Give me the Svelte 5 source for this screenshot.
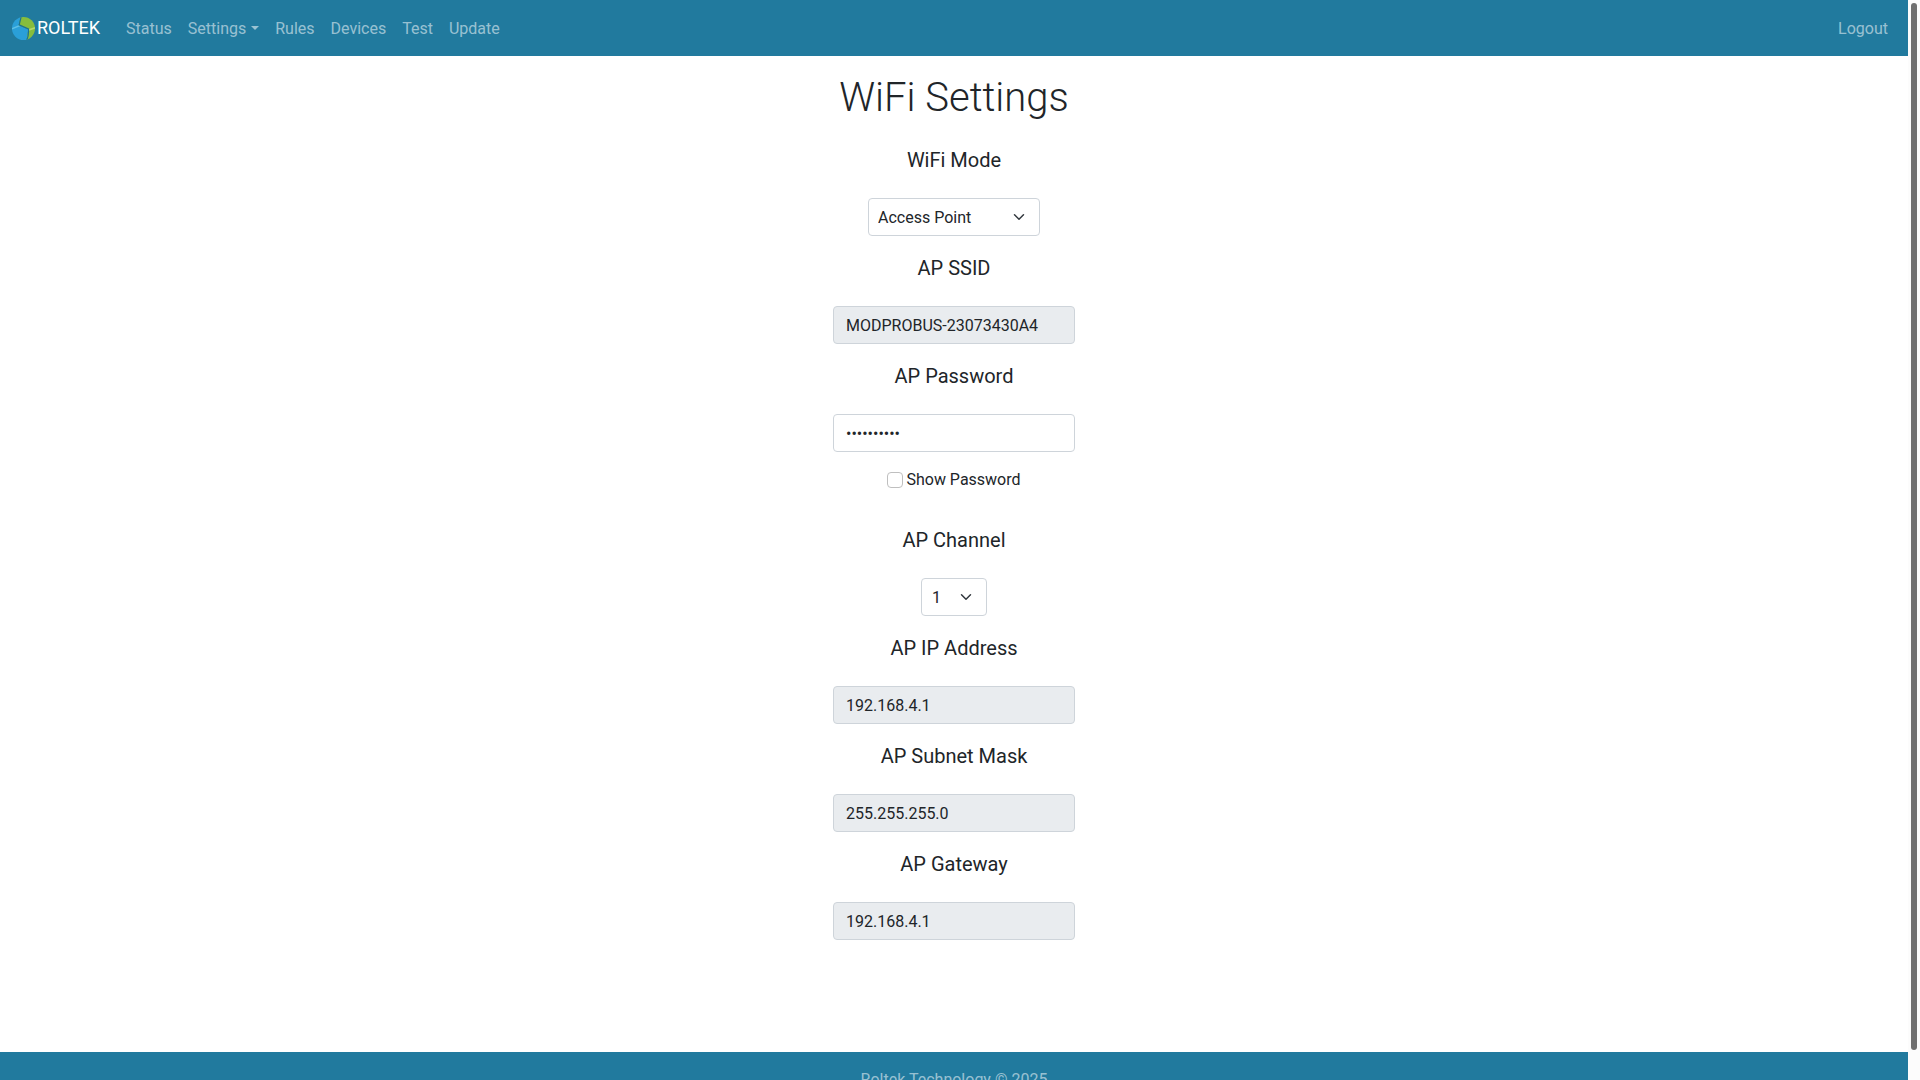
<script lang="ts">
  import { onMount } from 'svelte';

  const channels = [1, 2, 3, 4, 5, 6, 7, 8, 9, 10, 11, 12, 13];

  let mode = $state('ap');
  let ssid = $state('MODPROBUS-23073430A4');
  let password = $state('roltek1234');
  let showPassword = $state(false);
  let channel = $state(1);
  let ip = $state('192.168.4.1');
  let subnet = $state('255.255.255.0');
  let gateway = $state('192.168.4.1');

  let scroller: HTMLDivElement | undefined = $state();
  let thumbSize = $state(100);
  let thumbTop = $state(0);

  function updateThumb() {
    if (!scroller) return;
    thumbSize = (scroller.clientHeight / scroller.scrollHeight) * 100;
    thumbTop = (scroller.scrollTop / scroller.scrollHeight) * 100;
  }

  onMount(updateThumb);
</script>

<svelte:window onresize={updateThumb} />

<div class="shell">
  <div class="page" bind:this={scroller} onscroll={updateThumb}>
    <nav class="navbar">
      <a class="brand" href="#home">
        <svg width="23" height="23" viewBox="0 0 24 24">
          <clipPath id="globe"><circle cx="12" cy="12" r="12" /></clipPath>
          <g clip-path="url(#globe)">
            <path d="M0 0h9L7 8.500l10 4.200L15.300 24H0z" fill="#2a9fd8" />
            <path d="M9 0h15v24h-8.700L17 12.700 7 8.500z" fill="#86bd3d" />
            <path d="M0 11.500l7-3 1.500 1.200L0 13z" fill="#5fc0e6" />
            <path d="M17 12.700l7-2.200v1.700l-7 2.300z" fill="#b4d86c" />
            <path d="M9.500 0L7.500 8.200l9.700 4.200c.3 4-.3 8-1.700 11.600" fill="none" stroke="#1c7191" stroke-width="1.200" />
          </g>
        </svg>
        <span>ROLTEK</span>
      </a>
      <ul class="nav">
        <li><a href="#status">Status</a></li>
        <li><a class="dropdown" href="#settings">Settings</a></li>
        <li><a href="#rules">Rules</a></li>
        <li><a href="#devices">Devices</a></li>
        <li><a href="#test">Test</a></li>
        <li><a href="#update">Update</a></li>
      </ul>
      <a class="logout" href="#logout">Logout</a>
    </nav>

    <main>
      <h1>WiFi Settings</h1>
      <form>
        <div class="field">
          <label for="mode">WiFi Mode</label>
          <select id="mode" class="mode" bind:value={mode}>
            <option value="ap">Access Point</option>
            <option value="sta">Station</option>
          </select>
        </div>
        <div class="field">
          <label for="ssid">AP SSID</label>
          <input id="ssid" type="text" bind:value={ssid} disabled />
        </div>
        <div class="field">
          <label for="password">AP Password</label>
          <input id="password" type={showPassword ? 'text' : 'password'} bind:value={password} />
        </div>
        <div class="check">
          <input id="show" type="checkbox" bind:checked={showPassword} />
          <label for="show">Show Password</label>
        </div>
        <div class="field">
          <label for="channel">AP Channel</label>
          <select id="channel" bind:value={channel}>
            {#each channels as n}
              <option value={n}>{n}</option>
            {/each}
          </select>
        </div>
        <div class="field">
          <label for="ip">AP IP Address</label>
          <input id="ip" type="text" bind:value={ip} disabled />
        </div>
        <div class="field">
          <label for="subnet">AP Subnet Mask</label>
          <input id="subnet" type="text" bind:value={subnet} disabled />
        </div>
        <div class="field">
          <label for="gateway">AP Gateway</label>
          <input id="gateway" type="text" bind:value={gateway} disabled />
        </div>
      </form>
    </main>

    <footer>Roltek Technology © 2025</footer>
  </div>

  <div class="track" aria-hidden="true">
    <div class="rail">
      <div class="thumb" style="height: {thumbSize}%; top: {thumbTop}%"></div>
    </div>
  </div>
</div>

<style>
  :global(body) {
    margin: 0;
    font-family: Roboto, sans-serif;
    font-size: 16px;
    line-height: 24px;
    color: #212529;
    background: #fff;
  }

  .shell {
    display: grid;
    grid-template-columns: 1fr 12px;
    height: 100vh;
  }

  .page {
    overflow-y: auto;
    scrollbar-width: none;
  }

  .track {
    display: flex;
    justify-content: center;
    padding: 3px 0;
    background: #fcfcfc;
  }

  .rail {
    position: relative;
    width: 6px;
  }

  .thumb {
    position: absolute;
    width: 100%;
    border-radius: 3px;
    background: #707070;
  }

  .navbar {
    display: flex;
    align-items: center;
    box-sizing: border-box;
    min-height: 56px;
    padding: 8px 12px;
    background: #217a9e;
  }

  .navbar a {
    text-decoration: none;
  }

  .brand {
    display: flex;
    align-items: center;
    gap: 2px;
    margin-right: 18px;
    font-size: 18px;
    color: #fff;
  }

  .nav {
    display: flex;
    flex: 1;
    margin: 0;
    padding: 0;
    list-style: none;
  }

  .nav a,
  .logout {
    display: block;
    padding: 9px 8px 7px;
    color: rgba(255, 255, 255, 0.55);
  }

  .nav a:hover,
  .logout:hover {
    color: rgba(255, 255, 255, 0.75);
  }

  .dropdown::after {
    content: '';
    display: inline-block;
    margin-left: 5px;
    vertical-align: 4px;
    border-top: 4px solid;
    border-right: 4px solid transparent;
    border-left: 4px solid transparent;
  }

  main {
    padding: 18px 12px 112px;
  }

  h1 {
    margin: 0 0 26px;
    font-size: 40px;
    font-weight: 300;
    line-height: 48px;
    text-align: center;
  }

  form {
    display: flex;
    flex-direction: column;
    gap: 20px;
  }

  .field {
    display: flex;
    flex-direction: column;
    align-items: center;
    gap: 26px;
  }

  .field label {
    font-size: 20px;
    line-height: 24px;
  }

  .field input,
  .field select {
    box-sizing: border-box;
    height: 38px;
    padding: 6px 12px;
    border: 1px solid #ced4da;
    border-radius: 4px;
    font: inherit;
    color: #212529;
    background-color: #fff;
  }

  .field input {
    width: 242px;
  }

  .field input:disabled {
    background-color: #e9ecef;
  }

  .field select {
    width: 66px;
    padding: 7px 36px 5px 10px;
    appearance: none;
    background-image: url("data:image/svg+xml,%3csvg xmlns='http://www.w3.org/2000/svg' viewBox='0 0 16 16'%3e%3cpath fill='none' stroke='%23343a40' stroke-linecap='round' stroke-linejoin='round' stroke-width='2' d='M2 5l6 6 6-6'/%3e%3c/svg%3e");
    background-repeat: no-repeat;
    background-position: right 12px center;
    background-size: 16px 12px;
  }

  .field select.mode {
    width: 172px;
    padding-left: 9px;
  }

  .check {
    display: flex;
    align-items: center;
    justify-content: center;
    gap: 3px;
    margin: -4px 0 16px;
  }

  .check input {
    width: 16px;
    height: 16px;
    margin: 0;
    border: 1px solid #bfbfbf;
    border-radius: 4px;
    appearance: none;
    background: #fff;
  }

  .check input:checked {
    border-color: #0d6efd;
    background: #0d6efd;
  }

  footer {
    padding: 16px;
    text-align: center;
    color: rgba(255, 255, 255, 0.55);
    background: #217a9e;
  }
</style>
